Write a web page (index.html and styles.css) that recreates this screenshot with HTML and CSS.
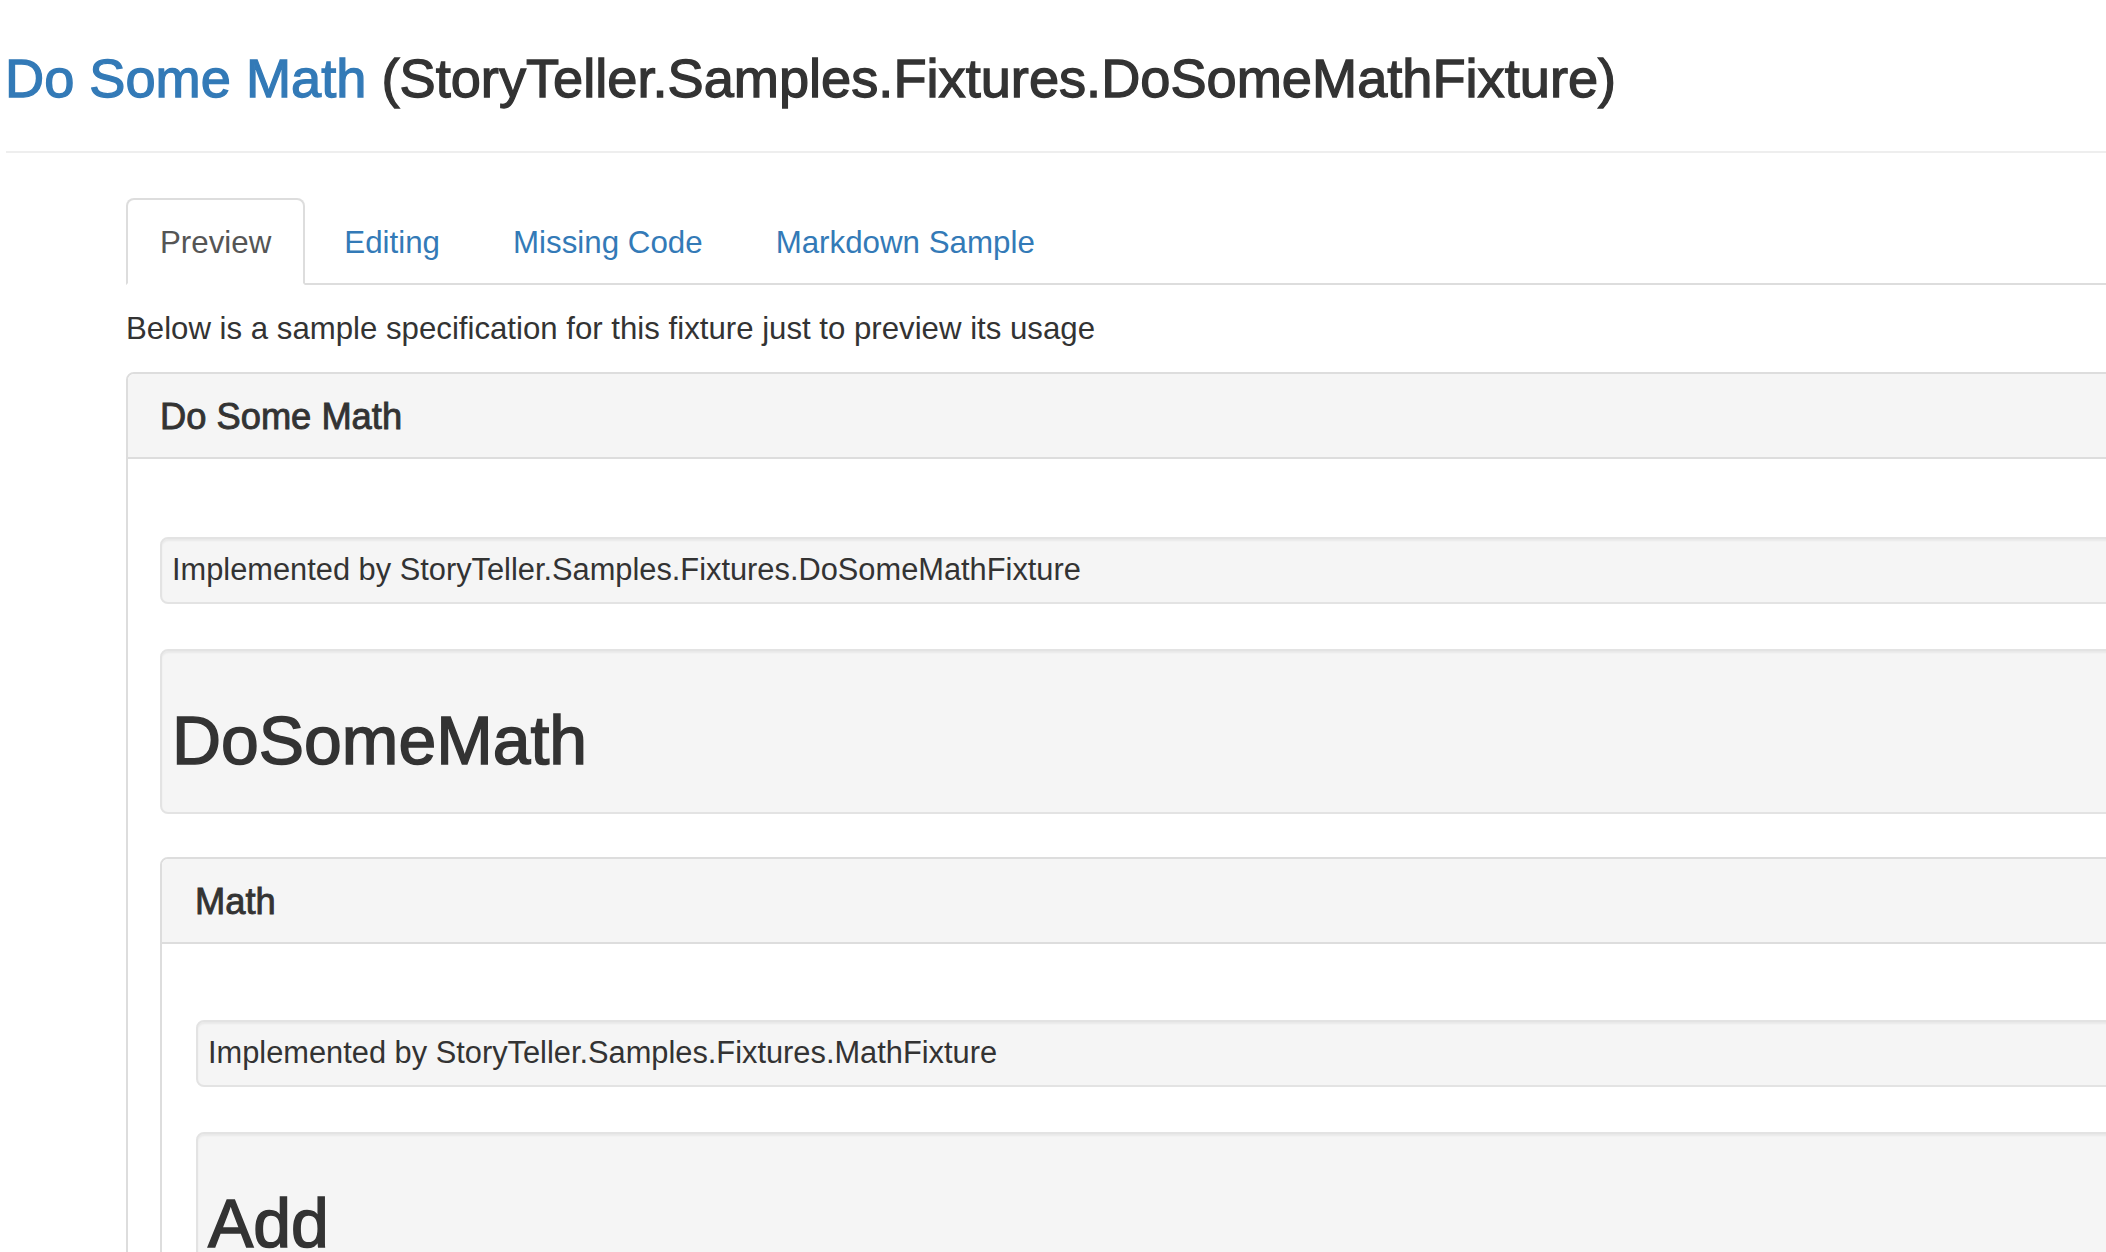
FILE: index.html
```html
<!DOCTYPE html>
<html lang="en">
<head>
<meta charset="utf-8">
<title>Do Some Math</title>
<link rel="stylesheet" href="styles.css">
</head>
<body>
<div class="page">
  <div class="page-header">
    <h1 class="title"><a class="title-link">Do Some Math</a> (StoryTeller.Samples.Fixtures.DoSomeMathFixture)</h1>
  </div>
  <div class="content">
    <ul class="tabs">
      <li class="tab active"><span>Preview</span></li>
      <li class="tab"><a>Editing</a></li>
      <li class="tab"><a>Missing Code</a></li>
      <li class="tab"><a>Markdown Sample</a></li>
    </ul>
    <p class="intro">Below is a sample specification for this fixture just to preview its usage</p>
    <div class="panel">
      <div class="panel-heading"><h3 class="panel-title">Do Some Math</h3></div>
      <div class="panel-body">
        <div class="well impl">Implemented by StoryTeller.Samples.Fixtures.DoSomeMathFixture</div>
        <div class="well grammar"><h2 class="grammar-title">DoSomeMath</h2></div>
        <div class="panel panel-inner">
          <div class="panel-heading"><h3 class="panel-title">Math</h3></div>
          <div class="panel-body">
            <div class="well impl">Implemented by StoryTeller.Samples.Fixtures.MathFixture</div>
            <div class="well grammar"><h2 class="grammar-title">Add</h2></div>
          </div>
        </div>
      </div>
    </div>
  </div>
</div>
</body>
</html>
```
FILE: styles.css
```css
html, body {
  margin: 0;
  padding: 0;
  overflow: hidden;
  background: #fff;
}

body {
  font-family: "Liberation Sans", Arial, Helvetica, sans-serif;
  font-size: 31px;
  line-height: 43px;
  color: #333;
}

.page {
  width: 2106px;
  height: 1252px;
  overflow: hidden;
}

.page-header {
  margin: 0 0 0 6px;
  padding: 49px 0 44px 0;
  border-bottom: 2px solid #eee;
}

.title {
  margin: 0 0 0 -1px;
  font-size: 54.2px;
  line-height: 58px;
  font-weight: 400;
  -webkit-text-stroke: 1.3px #333;
  white-space: nowrap;
}

.title-link {
  color: #337ab7;
  -webkit-text-stroke: 1.3px #337ab7;
}

.content {
  margin-left: 126px;
  width: 2200px;
}

.tabs {
  display: flex;
  list-style: none;
  margin: 45px 0 0 0;
  padding: 0;
  border-bottom: 2px solid #ddd;
}

.tab {
  margin: 0 5px -2px 0;
  padding: 21px 32px 19px 32px;
  font-size: 31.3px;
  line-height: 43px;
  border: 2px solid transparent;
  border-radius: 8px 8px 0 0;
  color: #337ab7;
}

.tab a {
  color: #337ab7;
  text-decoration: none;
}

.tab.active {
  color: #555;
  background: #fff;
  border-color: #ddd #ddd transparent #ddd;
}

.intro {
  margin: 22px 0 22px 0;
  font-size: 31.2px;
  line-height: 43px;
}

.panel {
  border: 2px solid #ddd;
  border-radius: 8px;
  background: #fff;
}

.panel-heading {
  padding: 22px 30px 19px 32px;
  background: #f5f5f5;
  border-bottom: 2px solid #ddd;
  border-radius: 6px 6px 0 0;
}

.panel-title {
  margin: 0;
  font-size: 36.3px;
  line-height: 42px;
  font-weight: 400;
  -webkit-text-stroke: 0.9px #333;
  color: #333;
}

.panel-body {
  padding: 78px 32px 0 32px;
}

.panel-inner .panel-heading {
  padding: 22px 32px 19px 33px;
}

.panel-inner .panel-body {
  padding: 76px 34px 0 34px;
}

.panel-inner {
  margin-top: 43px;
}

.well {
  background: #f5f5f5;
  border: 2px solid #e3e3e3;
  border-radius: 8px;
  box-shadow: inset 0 2px 2px rgba(0, 0, 0, 0.05);
}

.impl {
  padding: 9px 10px 11px 10px;
  font-size: 30.8px;
  line-height: 43px;
  margin-bottom: 45px;
  white-space: nowrap;
}

.grammar {
  padding: 10px 10px;
}

.grammar-title {
  margin: 43px 0 24px 0;
  font-size: 67.9px;
  line-height: 74px;
  font-weight: 400;
  -webkit-text-stroke: 1.5px #333;
  color: #333;
}
```
